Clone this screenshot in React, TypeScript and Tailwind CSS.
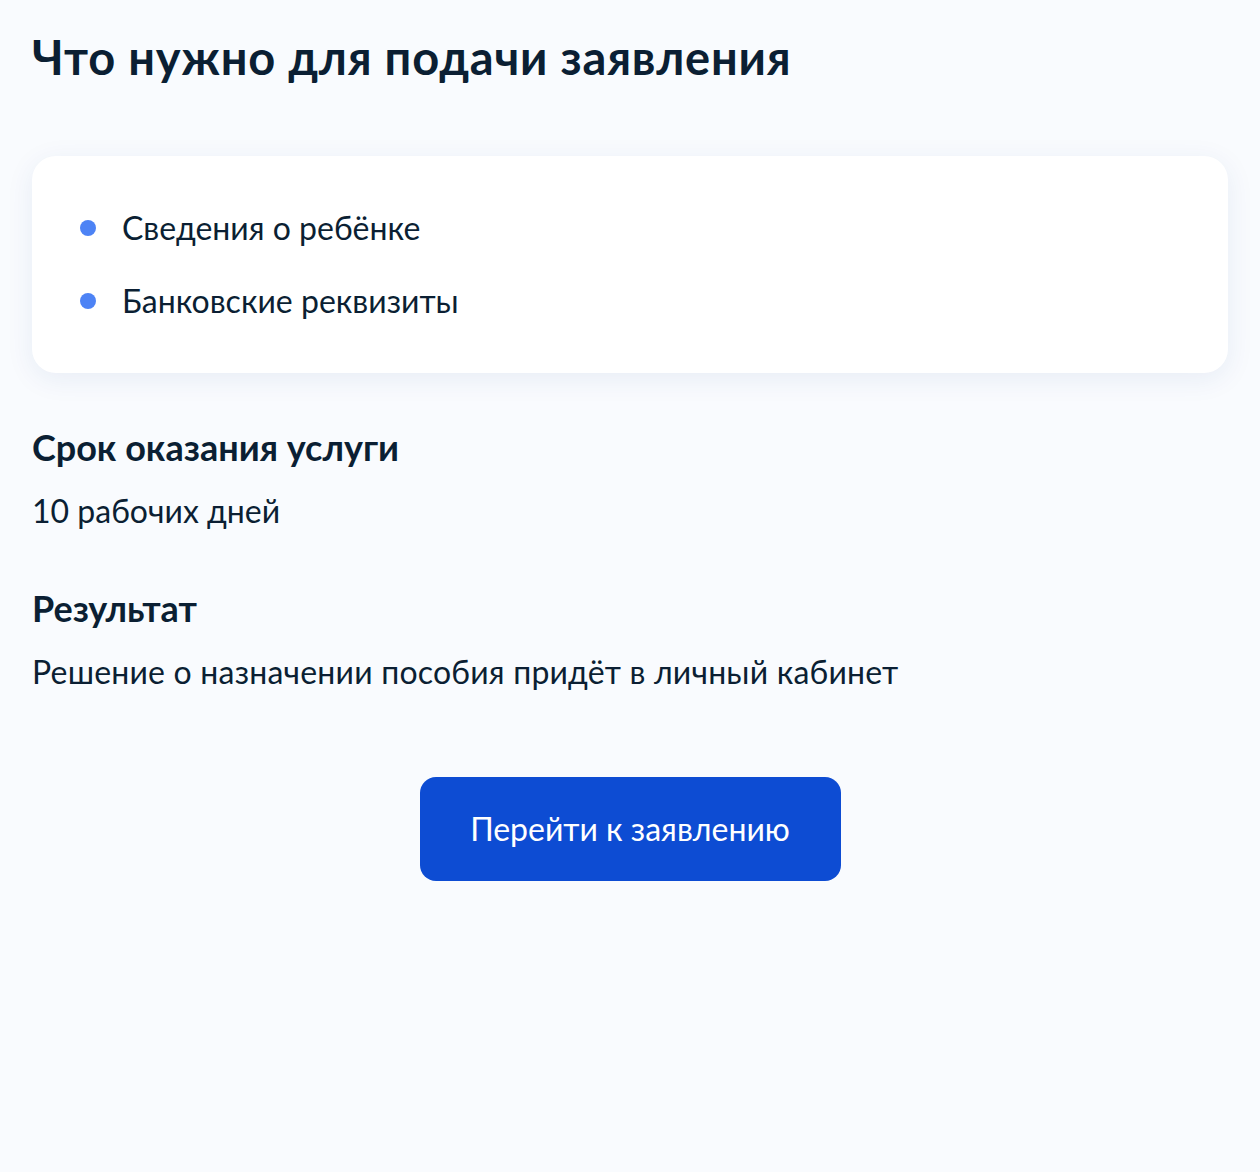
import React from "react";

export default function App() {
  return (
    <div className="min-h-[1172px] w-full bg-[#f9fbfe] px-8 pt-[29px] text-[#0b1f33] [font-family:Lato,'Noto_Sans',sans-serif]">
      <h1 className="text-[47px] font-bold leading-[56px] tracking-[0.8px]">Что нужно для подачи заявления</h1>

      <div className="mt-[71px] rounded-[24px] bg-white pl-12 py-[52px] shadow-[0_6px_28px_rgba(30,60,140,0.08)]">
        <ul className="flex flex-col gap-[33px]">
          <li className="flex items-center gap-[26px] text-[32px] leading-[40px]">
            <span className="h-4 w-4 shrink-0 rounded-full bg-[#4d83f5]" />
            <span>Сведения о ребёнке</span>
          </li>
          <li className="flex items-center gap-[26px] text-[32px] leading-[40px]">
            <span className="h-4 w-4 shrink-0 rounded-full bg-[#4d83f5]" />
            <span>Банковские реквизиты</span>
          </li>
        </ul>
      </div>

      <h2 className="mt-[52px] text-[36px] font-bold leading-[44px]">Срок оказания услуги</h2>
      <p className="mt-[22px] text-[32px] leading-[40px]">10 рабочих дней</p>

      <h2 className="mt-[55px] text-[36px] font-bold leading-[44px]">Результат</h2>
      <p className="mt-[22px] text-[32px] leading-[40px] tracking-[0.2px]">Решение о назначении пособия придёт в личный кабинет</p>

      <div className="mt-[85px] flex justify-center">
        <button className="flex h-[104px] w-[421px] items-center justify-center rounded-[16px] bg-[#0d4cd3] text-[32px] text-white">
          Перейти к заявлению
        </button>
      </div>
    </div>
  );
}
